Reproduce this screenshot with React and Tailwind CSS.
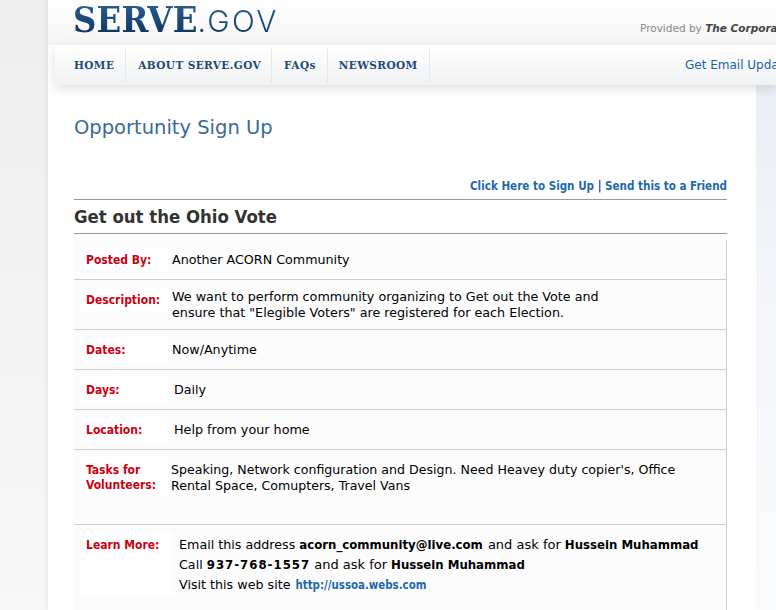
import React from 'react';

const sans = 'font-["DejaVu_Sans",sans-serif]';
const serif = 'font-["DejaVu_Serif",serif]';
const cond = 'font-["DejaVu_Sans_Condensed","DejaVu_Sans",sans-serif]';

const navItems = [
  { label: 'HOME', cls: 'pl-[19px] pr-[11px]' },
  { label: 'ABOUT SERVE.GOV', cls: 'pl-[12px] pr-[10px]' },
  { label: 'FAQs', cls: 'pl-[12px] pr-[11px]' },
  { label: 'NEWSROOM', cls: 'pl-[11px] pr-[11px]' },
];

const Row = ({ label, valueCls, rowCls, children }) => (
  <div className={`flex items-start border-b border-[#cccccc] pt-[7px] ${rowCls}`}>
    <div className={`ml-[7px] w-[87px] shrink-0 bg-white pb-[4px] pl-[5px] pt-[6px] text-[12px] font-bold leading-[15px] text-[#cc0011] ${cond}`}>
      {label}
    </div>
    <div className={`leading-[16px] text-black ${valueCls}`}>{children}</div>
  </div>
);

const Strong = ({ children }) => <b className={`text-[13.05px] ${cond}`}>{children}</b>;

export default function App() {
  return (
    <div className={`flex h-[610px] w-[776px] overflow-hidden bg-white ${sans}`}>
      {/* LEFT STRIP */}
      <div className="h-full w-[48px] shrink-0 bg-gradient-to-b from-[#eeeeee] to-[#f8f8f8]"></div>

      {/* MAIN COLUMN */}
      <div className="relative z-10 h-full w-[708px] shrink-0 bg-white shadow-[-2px_0_4px_rgba(0,0,0,0.06)]">
        {/* HEADER */}
        <div className="flex h-[45px] w-[728px] items-start justify-between bg-gradient-to-b from-[#ffffff] to-[#f4f4f4] pl-[25px]">
          <div className="flex items-baseline leading-[38px]">
            <span className='bg-gradient-to-b from-[#2f6591] to-[#0c3060] bg-clip-text font-["DejaVu_Serif_Condensed","DejaVu_Serif",serif] text-[36px] font-bold tracking-[0.2px] text-transparent'>SERVE</span>
            <span className='bg-gradient-to-b from-[#2f6591] to-[#0c3060] bg-clip-text font-["Inter",sans-serif] text-[30px] font-light tracking-[2.5px] text-transparent'>.GOV</span>
          </div>
          <div className="mt-[21px] w-[136px] overflow-hidden whitespace-nowrap text-[10.5px] leading-[14px] text-[#8a8a8a]">
            Provided by <span className="font-bold italic text-[#444444]">The Corporation for National and Community Service</span>
          </div>
        </div>

        {/* NAV */}
        <div className="ml-[7px] flex h-[40px] w-[721px] items-center justify-between bg-gradient-to-b from-[#ffffff] to-[#f1f2f4] shadow-[0_4px_10px_rgba(0,0,0,0.12)]">
          <div className={`flex h-[36px] items-center pt-px text-[10.5px] font-bold tracking-[0.4px] text-[#20497a] ${serif}`}>
            {navItems.map(item => (
              <div key={item.label} className={`flex h-full items-center border-r border-[#e6e7e9] ${item.cls}`}>{item.label}</div>
            ))}
          </div>
          <div className="w-[91px] overflow-hidden whitespace-nowrap text-[12px] text-[#1a62a8]">Get Email Updates</div>
        </div>

        {/* CONTENT */}
        <div className="ml-[26px] w-[653px]">
          <h1 className="mt-[29px] text-[19.5px] leading-[28px] text-[#38699f]">Opportunity Sign Up</h1>

          <div className={`mt-[37px] text-right text-[11.55px] font-bold leading-[14px] text-[#1c69ae] ${cond}`}>
            Click Here to Sign Up <span className="text-[#123f7a]">|</span> Send this to a Friend
          </div>

          <div className={`mt-[6px] border-y border-[#999999] py-[4px] text-[18.4px] font-bold leading-[25px] text-[#333333] ${cond}`}>
            Get out the Ohio Vote
          </div>

          <div className="mt-[6px] border-r border-[#cccccc] bg-[#fcfcfd]">
            <Row label="Posted By:" rowCls="h-[40px]" valueCls="ml-[4px] mt-[5px] text-[12.7px]">
              Another ACORN Community
            </Row>
            <Row label="Description:" rowCls="h-[50px]" valueCls="ml-[4px] mt-[2px] text-[12.72px]">
              We want to perform community organizing to Get out the Vote and<br />
              ensure that "Elegible Voters" are registered for each Election.
            </Row>
            <Row label="Dates:" rowCls="h-[40px]" valueCls="ml-[4px] mt-[5px] text-[12.7px]">
              Now/Anytime
            </Row>
            <Row label="Days:" rowCls="h-[40px]" valueCls="ml-[6px] mt-[5px] text-[12.7px]">
              Daily
            </Row>
            <Row label="Location:" rowCls="h-[40px]" valueCls="ml-[6px] mt-[5px] text-[12.75px]">
              Help from your home
            </Row>
            <Row label="Tasks for Volunteers:" rowCls="h-[75px]" valueCls="ml-[3px] mt-[5px] w-[530px] text-[12.6px]">
              Speaking, Network configuration and Design. Need Heavey duty copier's, Office<br />
              Rental Space, Comupters, Travel Vans
            </Row>
            <div className="flex h-[90px] items-start pt-[7px]">
              <div className={`ml-[7px] h-[63px] w-[92px] shrink-0 bg-white pl-[5px] pt-[6px] text-[12px] font-bold leading-[15px] text-[#cc0011] ${cond}`}>Learn More:</div>
              <div className="ml-[6px] mt-[3px] text-[12.7px] leading-[20px] text-black">
                <div>Email this address <Strong>acorn_community@live.com</Strong> <span className="ml-[1px] text-[13px]">and ask for</span> <Strong>Hussein Muhammad</Strong></div>
                <div>Call <b className={`text-[13.05px] tracking-[1px] ${cond}`}>937-768-1557</b> <span className="text-[13px]">and ask for</span> <Strong>Hussein Muhammad</Strong></div>
                <div>Visit this web site <b className={`ml-px text-[11.4px] text-[#1c69ae] ${cond}`}>http://ussoa.webs.com</b></div>
              </div>
            </div>
          </div>
        </div>
      </div>

      {/* RIGHT STRIP */}
      <div className="h-full w-[20px] shrink-0 bg-gradient-to-b from-[#e6ecf3] via-[#f4f6fa] to-[#fafbfc]"></div>
    </div>
  );
}
